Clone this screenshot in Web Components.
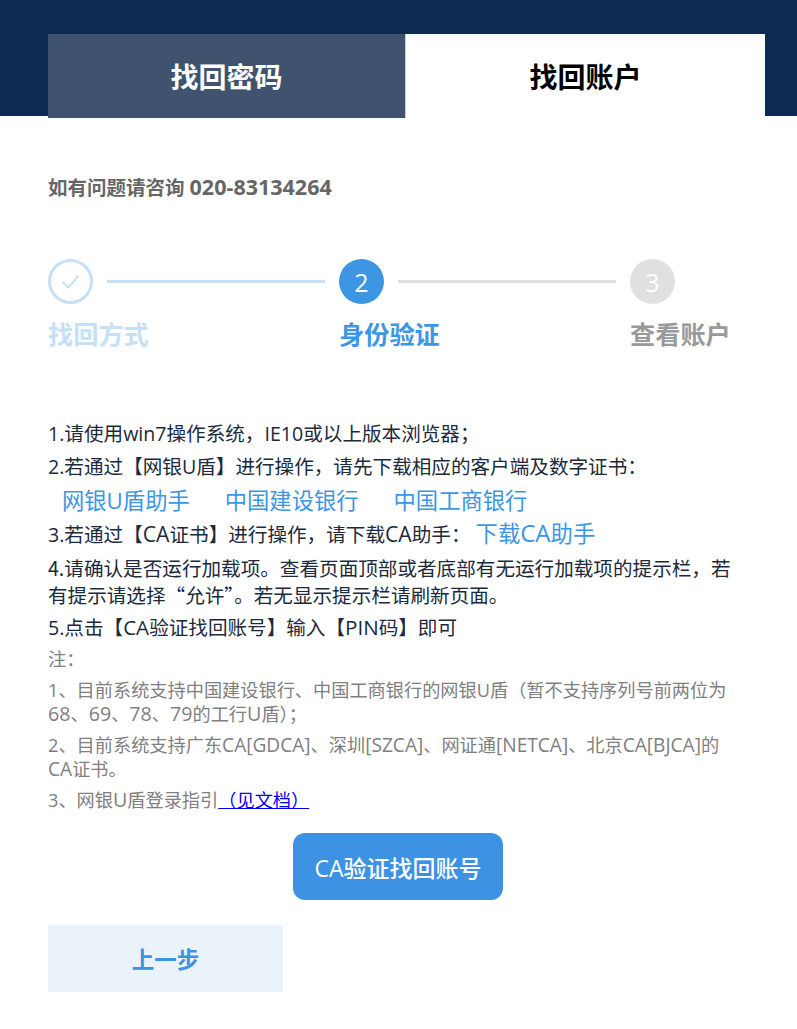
<!DOCTYPE html>
<html lang="zh-CN">
<head>
<meta charset="utf-8">
<title>找回账户</title>
<style>
    html, body { margin: 0; padding: 0; background: #fff; }
    body { font-family: "Open Sans", "Noto Sans CJK SC", sans-serif; color: #1b2a3c; }
    a { text-decoration: none; }
    .l { font-size: 1.08em; line-height: 1; }
    .l2 { font-size: 1.05em; line-height: 1; }
</style>
</head>
<body>
<recover-tabs>
    <tab-item>找回密码</tab-item>
    <tab-item active>找回账户</tab-item>
</recover-tabs>
<help-line>如有问题请咨询 <span style="font-size:21.5px;line-height:1">020-83134264</span></help-line>
<step-bar>
    <step-item state="done" label="找回方式"></step-item>
    <step-item state="current" num="2" label="身份验证"></step-item>
    <step-item num="3" label="查看账户" last></step-item>
</step-bar>
<guide-text>
    <guide-row>1.请使用win7操作系统，IE10或以上版本浏览器；</guide-row>
    <guide-row>2.若通过【网银U盾】进行操作，请先下载相应的客户端及数字证书：</guide-row>
    <guide-row links><guide-link>网银U盾助手</guide-link><guide-link>中国建设银行</guide-link><guide-link>中国工商银行</guide-link></guide-row>
    <guide-row>3.若通过【<span class="l">CA</span>证书】进行操作，请下载<span class="l">CA</span>助手： <guide-link>下载<span class="l">CA</span>助手</guide-link></guide-row>
    <guide-row cjk>4.请确认是否运行加载项。查看页面顶部或者底部有无运行加载项的提示栏，若有提示请选择“允许”。若无显示提示栏请刷新页面。</guide-row>
    <guide-row>5.点击【<span class="l2">CA</span>验证找回账号】输入【<span class="l2">PIN</span>码】即可</guide-row>
    <guide-note>注：</guide-note>
    <guide-note>1、目前系统支持中国建设银行、中国工商银行的网银U盾（暂不支持序列号前两位为<span class="l">68</span>、<span class="l">69</span>、<span class="l">78</span>、<span class="l">79</span>的工行<span class="l">U</span>盾）；</guide-note>
    <guide-note>2、目前系统支持广东<span class="l2">CA[GDCA]</span>、深圳<span class="l2">[SZCA]</span>、网证通<span class="l2">[NETCA]</span>、北京<span class="l2">CA[BJCA]</span>的<span class="l2">CA</span>证书。</guide-note>
    <guide-note>3、网银<span class="l">U</span>盾登录指引<a href="#" style="color:#0000ee;text-decoration:underline">（见文档）</a></guide-note>
</guide-text>
<action-button primary>CA验证找回账号</action-button>
<action-button>上一步</action-button>

<script>
class RecoverTabs extends HTMLElement {
    constructor() {
        super();
        this.attachShadow({ mode: 'open' });
        this.shadowRoot.innerHTML = `
            <style>
                :host { display: block; height: 116px; background: #0b2c50; box-sizing: border-box; padding: 34px 32px 0 48px; }
                .tabs { display: flex; height: 84px; }
            </style>
            <div class="tabs"><slot></slot></div>
        `;
    }
}
customElements.define("recover-tabs", RecoverTabs);

class TabItem extends HTMLElement {
    constructor() {
        super();
        this.attachShadow({ mode: 'open' });
        this.shadowRoot.innerHTML = `
            <style>
                :host { display: flex; align-items: center; justify-content: center; flex: 0 0 357px; font-size: 28px; font-weight: 700; color: #fff; background: #40536e; box-sizing: border-box; }
                :host([active]) { flex: 0 0 360px; color: #000; background: #fff; border-left: 1px solid #c9ced6; }
            </style>
            <slot></slot>
        `;
    }
}
customElements.define("tab-item", TabItem);

class HelpLine extends HTMLElement {
    constructor() {
        super();
        this.attachShadow({ mode: 'open' });
        this.shadowRoot.innerHTML = `
            <style>
                :host { display: block; height: 28px; margin: 58px 48px 0; font-size: 19.5px; line-height: 28px; font-weight: 700; color: #666; }
            </style>
            <slot></slot>
        `;
    }
}
customElements.define("help-line", HelpLine);

class StepBar extends HTMLElement {
    constructor() {
        super();
        this.attachShadow({ mode: 'open' });
        this.shadowRoot.innerHTML = `
            <style>
                :host { display: flex; margin: 57px 48px 0; }
            </style>
            <slot></slot>
        `;
    }
}
customElements.define("step-bar", StepBar);

class StepItem extends HTMLElement {
    constructor() {
        super();
        this.attachShadow({ mode: 'open' });
        this.shadowRoot.innerHTML = `
            <style>
                :host { display: block; flex: 0 0 291px; --c: #e0e0e0; --l: #e0e0e0; --t: #999; }
                :host([state="done"]) { --c: #c5e0f7; --l: #c5e0f7; --t: #c5e0f7; }
                :host([state="current"]) { --c: #3d96e3; --t: #3d96e3; }
                :host([last]) { flex: 0 0 auto; }
                .top { display: flex; align-items: center; height: 45px; }
                .dot { flex: none; width: 45px; height: 45px; box-sizing: border-box; border-radius: 50%; background: var(--c); color: #fff; font-size: 25px; display: flex; align-items: center; justify-content: center; }
                :host([state="done"]) .dot { background: #fff; border: 3px solid var(--c); }
                .line { width: 218px; height: 3px; margin-left: 14px; background: var(--l); }
                :host([last]) .line { display: none; }
                .label { margin-top: 12px; font-size: 25.2px; line-height: 36px; font-weight: 700; color: var(--t); white-space: nowrap; }
            </style>
            <div class="top"><div class="dot"></div><div class="line"></div></div>
            <div class="label"></div>
        `;
    }

    connectedCallback() {
        const dot = this.shadowRoot.querySelector(".dot");
        if (this.getAttribute("state") === "done") {
            dot.innerHTML = `<svg width="20" height="20" viewBox="0 0 20 20" fill="none" stroke="#c5e0f7" stroke-width="2"><path d="M1.500 10 L7.500 15.500 L17.500 3.500"/></svg>`;
        } else {
            dot.textContent = this.getAttribute("num");
        }
        this.shadowRoot.querySelector(".label").textContent = this.getAttribute("label");
    }
}
customElements.define("step-item", StepItem);

class GuideText extends HTMLElement {
    constructor() {
        super();
        this.attachShadow({ mode: 'open' });
        this.shadowRoot.innerHTML = `
            <style>
                :host { display: block; margin: 68px 48px 0 48px; width: 690px; }
            </style>
            <slot></slot>
        `;
    }
}
customElements.define("guide-text", GuideText);

class GuideRow extends HTMLElement {
    constructor() {
        super();
        this.attachShadow({ mode: 'open' });
        this.shadowRoot.innerHTML = `
            <style>
                :host { display: block; font-size: 19.6px; line-height: 27px; margin-bottom: 6px; color: #1b2a3c; }
                :host([cjk]) { font-family: "Noto Sans CJK SC", sans-serif; }
                :host([links]) { display: flex; gap: 35px; padding: 1px 0 0 14px; height: 28px; line-height: 28px; margin-bottom: 5px; }
            </style>
            <slot></slot>
        `;
    }
}
customElements.define("guide-row", GuideRow);

class GuideLink extends HTMLElement {
    constructor() {
        super();
        this.attachShadow({ mode: 'open' });
        this.shadowRoot.innerHTML = `
            <style>
                :host { display: inline; font-size: 22.3px; color: #3d96e3; cursor: pointer; }
            </style>
            <slot></slot>
        `;
    }
}
customElements.define("guide-link", GuideLink);

class GuideNote extends HTMLElement {
    constructor() {
        super();
        this.attachShadow({ mode: 'open' });
        this.shadowRoot.innerHTML = `
            <style>
                :host { display: block; font-size: 18.2px; line-height: 24px; margin-bottom: 7px; color: #808080; }
            </style>
            <slot></slot>
        `;
    }
}
customElements.define("guide-note", GuideNote);

class ActionButton extends HTMLElement {
    constructor() {
        super();
        this.attachShadow({ mode: 'open' });
        this.shadowRoot.innerHTML = `
            <style>
                :host { display: flex; align-items: center; justify-content: center; width: 235px; height: 67px; margin: 25px 0 0 48px; font-size: 22.5px; font-weight: 700; color: #3d92e3; background: #ebf3fa; cursor: pointer; }
                :host([primary]) { width: 210px; margin: 21px 0 0 293px; font-size: 23px; font-weight: 500; color: #fff; background: #3d92e3; border-radius: 12px; }
            </style>
            <slot></slot>
        `;
    }
}
customElements.define("action-button", ActionButton);
</script>
</body>
</html>
